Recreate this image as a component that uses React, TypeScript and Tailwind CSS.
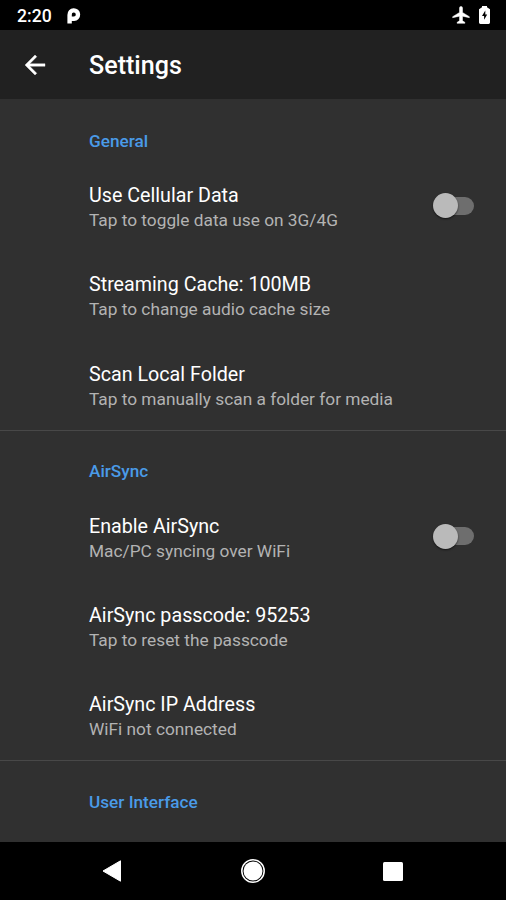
type Item = { title: string; detail: string; toggle?: boolean };
type Group = { name: string; items: Item[] };

const groups: Group[] = [
  {
    name: 'General',
    items: [
      { title: 'Use Cellular Data', detail: 'Tap to toggle data use on 3G/4G', toggle: true },
      { title: 'Streaming Cache: 100MB', detail: 'Tap to change audio cache size' },
      { title: 'Scan Local Folder', detail: 'Tap to manually scan a folder for media' },
    ],
  },
  {
    name: 'AirSync',
    items: [
      { title: 'Enable AirSync', detail: 'Mac/PC syncing over WiFi', toggle: true },
      { title: 'AirSync passcode: 95253', detail: 'Tap to reset the passcode' },
      { title: 'AirSync IP Address', detail: 'WiFi not connected' },
    ],
  },
  { name: 'User Interface', items: [] },
];

function StatusBar() {
  return (
    <div className="flex h-[30px] shrink-0 items-center bg-black pr-[16px] pl-[17px] text-white">
      <span className="w-[50px] pt-[2px] text-[17.6px] leading-[28px] font-medium">2:20</span>
      <svg className="mt-px h-[16px] w-[14px]" viewBox="0 0 14 16" fill="none">
        <path d="M2.6 15.6V6.8a4.2 4.2 0 1 1 4.4 4H4.6" stroke="white" strokeWidth="4.4" />
      </svg>
      <div className="ml-auto flex items-center">
        <svg className="h-[20px] w-[20px]" viewBox="0 0 24 24" fill="white">
          <path
            d="M10.2 9V3.5a1.8 1.8 0 0 1 3.6 0V9L22 14v1.2l-8.2-1.8V19l2.8 1.7V22H7.4v-1.3l2.8-1.7v-5.6L2 15.2V14z"
            stroke="white"
            strokeWidth="0.6"
          />
        </svg>
        <svg className="ml-[8px] h-[18px] w-[11px]" viewBox="0 0 11 18">
          <path d="M3 0h5v1.2L11 3.2v13.4Q11 18 9.6 18H1.4Q0 18 0 16.6V3.2L3 1.2z" fill="white" />
          <path d="M6.3 4.6 3 10h2.1v3.7L8.2 8.4H6.3z" fill="black" />
        </svg>
      </div>
    </div>
  );
}

function AppBar() {
  return (
    <header className="flex h-[69px] shrink-0 items-center bg-[#212121] pl-[20px] text-white">
      <svg className="h-[30px] w-[30px]" viewBox="0 0 24 24" fill="white">
        <path
          d="M20 11H7.83l5.59-5.59L12 4l-8 8 8 8 1.41-1.41L7.83 13H20z"
          stroke="white"
          strokeWidth="0.3"
        />
      </svg>
      <h1 className="ml-[39px] pt-[2px] text-[25.1px] leading-[32px] font-medium">Settings</h1>
    </header>
  );
}

function Toggle() {
  return (
    <div className="-mt-[4px] flex h-[26px] w-[41px] items-center">
      <div className="z-10 h-[25px] w-[25px] shrink-0 rounded-full bg-[#bababa] shadow-[0_1px_2px_rgba(0,0,0,0.6)]" />
      <div className="-ml-[19px] h-[18px] w-[35px] shrink-0 rounded-full bg-[#6e6e6e]" />
    </div>
  );
}

function Row({ item }: { item: Item }) {
  return (
    <div className="flex h-[89.4px] items-center pt-[3px] pr-[32px] pl-[89px]">
      <div className="flex-1">
        <div className="text-[19.7px] leading-[25px] text-white">{item.title}</div>
        <div className="text-[17.3px] leading-[24px] text-[#b3b3b3]">{item.detail}</div>
      </div>
      {item.toggle && <Toggle />}
    </div>
  );
}

function NavBar() {
  return (
    <nav className="flex h-[58px] shrink-0 items-center justify-between bg-black pr-[103px] pl-[102px]">
      <svg className="h-[22px] w-[20px]" viewBox="0 0 20 22" fill="white">
        <path d="M1 11 18.5.8v20.4z" stroke="white" strokeLinejoin="round" />
      </svg>
      <svg className="h-[24px] w-[24px]" viewBox="0 0 24 24">
        <circle cx="12" cy="12" r="11.2" stroke="white" strokeWidth="1.5" />
        <circle cx="12" cy="12" r="9.5" fill="white" />
      </svg>
      <div className="h-[19px] w-[20px] rounded-[1.5px] bg-white" />
    </nav>
  );
}

export default function App() {
  return (
    <div className="flex h-[900px] w-[506px] flex-col overflow-hidden bg-[#303030] font-['Roboto',sans-serif]">
      <StatusBar />
      <AppBar />
      <main className="min-h-0 flex-1 overflow-hidden">
        {groups.map((group, i) => (
          <section key={group.name} className={i > 0 ? 'border-t border-[#484848]' : 'pt-px'}>
            <h2 className="h-[61.4px] pt-[28.5px] pl-[89px] text-[17.2px] leading-[24px] font-medium text-[#4a9be8]">
              {group.name}
            </h2>
            {group.items.map((item) => (
              <Row key={item.title} item={item} />
            ))}
          </section>
        ))}
      </main>
      <NavBar />
    </div>
  );
}
